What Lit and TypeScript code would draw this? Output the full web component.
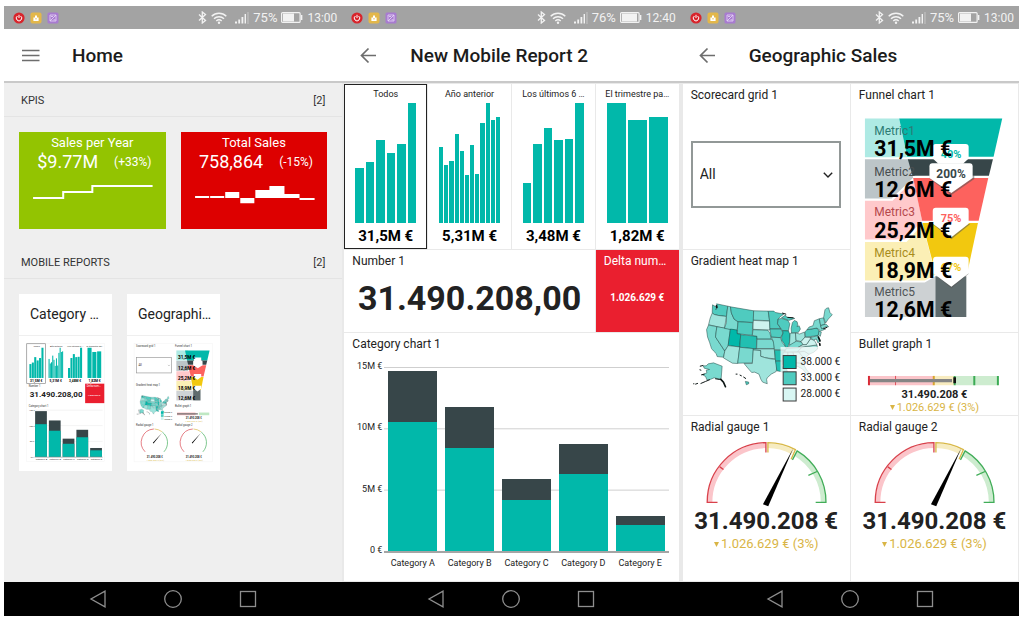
import { LitElement, html, css, svg } from "lit";
import { customElement, property } from "lit/decorators.js";
import { classMap } from "lit/directives/class-map.js";

const TEAL = "#01b8aa";
const SLATE = "#374649";

interface Selector {
  label: string;
  value: string;
  bars: number[];
  dense?: boolean;
}

const selectors: Selector[] = [
  { label: "Todos", value: "31,5M €", bars: [46, 51, 69, 58, 66, 100] },
  { label: "Año anterior", value: "5,31M €", bars: [63, 48, 52, 74, 60, 40, 65, 41, 83, 100, 86, 88], dense: true },
  { label: "Los últimos 6 …", value: "3,48M €", bars: [33, 66, 79, 69, 70, 100] },
  { label: "El trimestre pa…", value: "1,82M €", bars: [100, 86, 88] },
];

const categories = [
  { name: "Category A", total: 98, lower: 70 },
  { name: "Category B", total: 78, lower: 56 },
  { name: "Category C", total: 39, lower: 28 },
  { name: "Category D", total: 58, lower: 42 },
  { name: "Category E", total: 19, lower: 14 },
];

const L0 = "#cdf3ef";
const L1 = "#9fe4dc";
const L2 = "#79d9cf";
const L3 = "#4fcbbf";
const L4 = "#22bfb1";

const states: [string, string][] = [
  [L3, "95,165 107,172 105,180 110,172 107,162 141,169 137,200 112,197 100,194 94,189"],
  [L1, "94,190 100,194 112,197 137,200 131,236 83,225 88,205"],
  [L2, "83,226 108,231 104,262 132,305 128,323 109,321 106,312 98,304 92,297 86,278 80,262 77,240"],
  [L2, "108,231 149,238 142,290 136,298 132,304 104,262"],
  [L2, "141,169 149,171 152,190 160,208 172,216 169,243 131,236 137,218 137,200"],
  [L3, "149,171 219,183 218,218 172,216 160,208 152,190"],
  [L3, "172,216 216,219 215,257 169,252"],
  [TEAL, "149,238 169,241 169,252 180,254 177,292 142,288"],
  [L4, "180,255 229,260 227,298 177,293"],
  [L1, "142,288 177,292 171,342 155,341 128,325 132,304 136,298"],
  [L2, "177,293 218,297 215,340 171,341"],
  [L2, "219,183 263,184 267,213 218,211"],
  [L0, "218,212 267,214 268,241 217,239"],
  [L2, "217,240 262,242 268,250 272,268 229,268 229,260 215,257"],
  [L2, "229,269 274,269 281,280 281,297 228,297"],
  [L1, "218,298 281,298 284,328 265,326 252,324 240,320 240,303 218,301"],
  [L1, "218,301 240,303 240,320 252,324 265,327 285,330 289,350 287,366 272,374 260,385 258,390 260,403 246,398 241,390 235,374 222,368 213,369 205,360 190,342 215,342"],
  [L3, "263,184 280,184 284,188 310,193 298,202 292,209 291,222 301,237 268,237 267,213"],
  [L3, "268,238 301,238 308,250 300,264 272,262"],
  [L2, "272,263 300,264 305,278 318,296 314,302 282,300 278,274"],
  [L4, "282,302 313,302 305,335 285,334"],
  [L4, "285,335 304,335 304,352 316,354 322,368 312,370 300,366 289,364"],
  [L3, "293,208 303,206 322,212 328,222 324,243 306,243 301,236 291,222"],
  [L4, "306,243 324,244 329,256 328,275 322,293 317,294 311,282 304,272 303,262 308,250"],
  [L3, "303,204 315,196 318,202 330,204 343,206 325,212"],
  [L3, "336,218 342,212 350,216 352,224 350,231 356,228 360,238 354,248 333,250 332,236"],
  [L1, "329,251 345,250 347,275 335,285 327,286"],
  [L1, "345,250 358,253 372,247 374,262 362,276 347,272"],
  [L2, "322,294 330,285 347,275 362,277 368,284 352,294"],
  [L2, "317,297 365,293 352,307 313,308"],
  [L2, "308,308 322,308 322,345 306,345"],
  [L2, "322,308 338,308 344,338 325,342"],
  [L1, "338,308 356,308 372,328 368,342 345,340"],
  [L1, "325,343 344,340 368,342 378,360 392,376 388,386 380,374 366,358 350,350 335,350"],
  [L1, "356,308 372,304 386,314 372,328"],
  [L1, "352,306 366,292 410,286 412,298 400,308 386,314 372,305"],
  [L0, "352,294 368,285 378,285 390,268 402,272 410,286 366,292"],
  [L0, "362,276 374,262 388,264 394,262 378,285 368,285"],
  [L3, "374,246 380,240 410,235 417,245 413,258 375,262"],
  [L2, "380,240 386,232 398,228 402,213 417,207 422,233 436,238 421,244 410,235"],
  [L2, "417,207 430,204 434,224 421,227"],
  [L2, "430,203 434,180 439,175 445,174 449,188 456,195 444,208 436,220"],
  [L2, "421,228 437,223 445,231 434,232 424,238"],
  [L2, "416,244 423,247 420,260 414,256"],
  [L2, "388,264 413,258 420,272 413,280 408,268 400,271"],
  [L2, "67,349 76,349 82,343 98,340 124,350 121,388 112,388 100,385 88,390 78,391 74,381 65,376 78,370 76,362 86,360 70,356"],
  [L3, "194,396 204,398 204,403 197,406"],
];

const usMap = svg`
  <g stroke="#1d4441" stroke-width="1.500" stroke-linejoin="round">
    ${states.map(([fill, points]) => svg`<polygon fill=${fill} points=${points}></polygon>`)}
  </g>
  <g fill="none" stroke="#0c1514" stroke-linecap="round">
    <path stroke-width="5" d="M107 168l1 5M414 262l5 12M418 282l1 5M120 390l8 8 6 14"></path>
    <path stroke-width="3" d="M66 348l-8 2M60 362l-3-1M70 374l-8 2M86 391l-12 5-14 6M50 402l-6 2M38 403h1M166 374h3M178 377l4 2M189 383l6 4M306 190l10 3M322 203l16 1M430 237l10-4M104 388l12 2"></path>
  </g>`;

const gauge = svg`
  <g fill="none" stroke-width="15">
    <path stroke="#fbc5ca" d="M87 275A171 171 0 0 1 256 104"></path>
    <path stroke="#f6ecc1" d="M261 104A171 171 0 0 1 337 123"></path>
    <path stroke="#cdeccf" d="M344 127A171 171 0 0 1 429 275"></path>
  </g>
  <g fill="none" stroke-width="4">
    <path stroke="#d9414b" d="M110 275H79A179 179 0 0 1 256 95V125M117 168l11 8"></path>
    <path stroke="#d8b846" d="M262 125V95A179 179 0 0 1 345 116L332 145"></path>
    <path stroke="#41ad58" d="M336 147L350 120A179 179 0 0 1 437 275H406M384 194l26-12"></path>
  </g>
  <path d="M338 113L263 287 247 281Z"></path>`;

@customElement("status-bar")
class StatusBar extends LitElement {
  @property() battery = "75%";
  @property() time = "13:00";
  @property({ type: Number }) level = 10;

  static styles = css`
    :host {
      display: flex;
      align-items: center;
      justify-content: space-between;
      height: 23px;
      padding: 0 5px 0 9px;
      background: #a3a3a3;
      color: #f2f2f2;
      font-size: 13px;
    }
    .group {
      display: flex;
      align-items: center;
      gap: 5px;
    }
    .status {
      gap: 4px;
    }
    svg {
      display: block;
    }
    .wifi {
      margin-right: 4px;
    }
    .time {
      font-size: 12px;
    }
  `;

  render() {
    return html`
      <div class="group">
        <svg width="12" height="12" viewBox="0 0 12 12"><circle cx="6" cy="6" r="5.6" fill="#d8242b"></circle><path d="M4.400 4a2.700 2.700 0 1 0 3.200 0M6 2.800V6" fill="none" stroke="#fff" stroke-width="1"></path></svg>
        <svg width="12" height="12" viewBox="0 0 12 12"><rect x=".5" y=".5" width="11" height="11" rx="2" fill="#e3b74a"></rect><path d="M3.400 5.500h5.200V9H3.400zM5 5.500V3.500h2v2" fill="#fff"></path><path d="M6 6v1.500" stroke="#e3b74a"></path></svg>
        <svg width="12" height="12" viewBox="0 0 12 12"><rect x=".5" y=".5" width="11" height="11" rx="1.500" fill="#a87bd0"></rect><path d="M3 3h6v6H3zM3 9l6-6M4 4.500h2M6.500 7.800h2" fill="none" stroke="#e9d9f7" stroke-width=".8"></path></svg>
      </div>
      <div class="group status">
        <svg width="9" height="13" viewBox="0 0 9 13"><path d="M1 3.500l6.500 6L4.300 12V1l3.200 2.500L1 9.500" fill="none" stroke="#f2f2f2" stroke-width="1.300"></path></svg>
        <svg class="wifi" width="16" height="12" viewBox="0 0 16 12"><g fill="none" stroke="#f2f2f2" stroke-width="1.500"><path d="M.7 4.200a10.500 10.500 0 0 1 14.600 0M3 6.700a7.200 7.200 0 0 1 10 0M5.300 9a4 4 0 0 1 5.400 0"></path></g><circle cx="8" cy="10.700" r="1.200" fill="#f2f2f2"></circle></svg>
        <svg width="14" height="12" viewBox="0 0 14 12"><path d="M0 9.500h2v2H0zM3.300 7.500h1.800v4H3.300zM6.500 5h1.800v6.500H6.500zM9.600 2h1.400v9.500H9.600z" fill="#f2f2f2"></path><path d="M13 0v12" stroke="#c6c6c6"></path></svg>
        <span>${this.battery}</span>
        <svg width="22" height="11" viewBox="0 0 22 11"><rect x=".6" y=".6" width="18.500" height="9.800" rx="1" fill="none" stroke="#f2f2f2" stroke-width="1.200"></rect><rect x="2" y="1.500" width=${this.level} height="8" fill="#f2f2f2"></rect><path d="M20.600 3v5" stroke="#f2f2f2" stroke-width="1.500"></path></svg>
        <span class="time">${this.time}</span>
      </div>
    `;
  }
}

@customElement("title-bar")
class TitleBar extends LitElement {
  @property() heading = "";
  @property() icon = "back";

  static styles = css`
    :host {
      display: flex;
      align-items: center;
      gap: 30px;
      height: 52px;
      padding: 0 18px;
      background: #fff;
      border-bottom: 2px solid #c9c9c9;
    }
    button {
      display: block;
      padding: 0;
      border: 0;
      background: none;
    }
    svg {
      display: block;
    }
    h1 {
      margin: 0;
      padding-top: 2px;
      font-size: 19px;
      line-height: 24px;
      font-weight: 500;
      color: #1c1c1c;
    }
  `;

  render() {
    return html`
      <button aria-label=${this.icon === "menu" ? "Menu" : "Back"}>
        <svg width="20" height="20" viewBox="0 0 20 20" fill="none" stroke="#6d6d6d" stroke-width="1.700">
          ${this.icon === "menu"
            ? svg`<path d="M0 5.500h17.500M0 10.500h17.500M0 15.500h17.500"></path>`
            : svg`<path d="M16 10.500H1.500M8.500 3.500l-7 7 7 7"></path>`}
        </svg>
      </button>
      <h1>${this.heading}</h1>
    `;
  }
}

@customElement("nav-bar")
class NavBar extends LitElement {
  static styles = css`
    :host {
      display: flex;
      align-items: center;
      justify-content: center;
      gap: 57px;
      height: 34px;
      background: #000;
    }
    button {
      padding: 0;
      border: 0;
      background: none;
    }
    svg {
      display: block;
    }
  `;

  render() {
    const icon = (label: string, shape: unknown) => html`
      <button aria-label=${label}>
        <svg width="18" height="18" viewBox="0 0 18 18" fill="none" stroke="#8e8e8e" stroke-width="1.300">${shape}</svg>
      </button>`;
    return html`
      ${icon("Back", svg`<path d="M16 1.200v15.600L2 9z"></path>`)}
      ${icon("Home", svg`<circle cx="9" cy="9" r="8.300"></circle>`)}
      ${icon("Recent", svg`<rect x="1.500" y="1.500" width="15" height="15"></rect>`)}
    `;
  }
}

@customElement("home-screen")
class HomeScreen extends LitElement {
  static styles = css`
    :host {
      display: block;
      padding-top: 1px;
      background: #efefef;
      color: #333;
    }
    h2 {
      display: flex;
      justify-content: space-between;
      align-items: center;
      height: 32px;
      margin: 0;
      padding: 0 17px;
      border-bottom: 1px solid #e4e4e4;
      font-size: 11px;
      font-weight: 400;
      color: #333;
    }
    .kpis {
      display: grid;
      grid-template-columns: 1fr 1fr;
      gap: 15px;
      padding: 15px 15px 17px;
    }
    .kpi {
      height: 97px;
      color: #fff;
      text-align: center;
    }
    .green {
      background: #93c401;
    }
    .red {
      background: #dd0000;
    }
    h3 {
      margin: 0;
      padding-top: 2px;
      font-size: 13px;
      line-height: 17px;
      font-weight: 400;
    }
    .figures {
      display: flex;
      justify-content: center;
      align-items: center;
      gap: 16px;
      padding-left: 4px;
      line-height: 22px;
    }
    .amount {
      font-size: 18px;
    }
    .change {
      font-size: 12px;
    }
    svg {
      display: block;
      width: 100%;
    }
    .reports {
      display: flex;
      gap: 15px;
      padding: 15px;
    }
    .report {
      width: 93px;
      color: #222;
      text-decoration: none;
    }
    .name {
      display: block;
      margin-bottom: 1px;
      padding: 0 11px;
      background: #fff;
      font-size: 14px;
      line-height: 41px;
      white-space: nowrap;
    }
    .thumb {
      display: block;
      background: #fff;
    }
    text {
      font-family: Roboto, sans-serif;
    }
  `;

  private miniBars(x: number, width: number, data: number[]) {
    const step = width / data.length;
    return data.map(
      (v, i) => svg`<rect x=${x + i * step} y=${295 - v * 0.9} width=${step * 0.85} height=${v * 0.9} fill=${TEAL}></rect>`
    );
  }

  render() {
    const miniText = (x: number, y: number, t: string, size = 8, fill = "#333", weight = 400) =>
      svg`<text x=${x} y=${y} font-size=${size} fill=${fill} font-weight=${weight}>${t}</text>`;
    return html`
      <h2><span>KPIS</span><span>[2]</span></h2>
      <div class="kpis">
        <section class="kpi green">
          <h3>Sales per Year</h3>
          <div class="figures"><span class="amount">$9.77M</span><span class="change">(+33%)</span></div>
          <svg viewBox="0 0 146 40"><path d="M14 25h30v-6h29v-6h60" fill="none" stroke="#fff" stroke-width="2"></path></svg>
        </section>
        <section class="kpi red">
          <h3>Total Sales</h3>
          <div class="figures"><span class="amount">758,864</span><span class="change">(-15%)</span></div>
          <svg viewBox="0 0 146 40"><path fill="#fff" d="M14 23h14v2H14zM29 23h14v2H29zM44 19h14v6H44zM59 25h14v5H59zM74 17h14v8H74zM88 13h15v12H88zM103 21h15v4h-15zM118 25h15v2h-15z"></path></svg>
        </section>
      </div>
      <h2><span>MOBILE REPORTS</span><span>[2]</span></h2>
      <div class="reports">
        <a class="report" href="#category">
          <span class="name">Category …</span>
          <svg class="thumb" viewBox="59 170 277 402">
            <rect x="82" y="193" width="231" height="350" fill="none" stroke="#eee"></rect>
            <rect x="82" y="193" width="56" height="118" fill="none" stroke="#888" stroke-width="2"></rect>
            ${this.miniBars(90, 43, selectors[0].bars)} ${this.miniBars(147, 44, selectors[1].bars)}
            ${this.miniBars(205, 43, selectors[2].bars)} ${this.miniBars(263, 43, selectors[3].bars)}
            ${miniText(102, 202, "Todos", 7)} ${miniText(151, 202, "Año anterior", 7)}
            ${miniText(203, 202, "Los últimos 6 …", 7)} ${miniText(260, 202, "El trimestre pa…", 7)}
            ${selectors.map((s, i) => miniText(92 + i * 58, 306, s.value, 10, "#000", 700))}
            ${miniText(88, 321, "Number 1")} ${miniText(91, 352, "31.490.208,00", 24, "#222", 700)}
            <rect x="256" y="312" width="57" height="58" fill="#ea1f2f"></rect>
            ${miniText(261, 321, "Delta num…", 8, "#fff")} ${miniText(264, 348, "1.026.629 €", 7, "#fff", 700)}
            ${miniText(88, 381, "Category chart 1")}
            <path d="M105 391h203M105 437h203M105 484h203" stroke="#ddd"></path>
            ${categories.map((c, i) => {
              const x = 107 + i * 41;
              return svg`<rect x=${x} y=${530 - c.total * 1.39} width="35" height=${c.total * 1.39} fill=${SLATE}></rect>
                <rect x=${x} y=${530 - c.lower * 1.39} width="35" height=${c.lower * 1.39} fill=${TEAL}></rect>
                ${miniText(x + 2, 540, c.name, 7)}`;
            })}
            ${miniText(89, 393, "15M €", 6)} ${miniText(89, 440, "10M €", 6)} ${miniText(91, 486, "5M €", 6)} ${miniText(94, 532, "0 €", 6)}
            <path d="M105 531h203" stroke="#999" stroke-width="2"></path>
          </svg>
        </a>
        <a class="report" href="#geographic">
          <span class="name">Geographi…</span>
          <svg class="thumb" viewBox="382 170 277 402">
            <rect x="403" y="193" width="234" height="352" fill="none" stroke="#eee"></rect>
            ${miniText(409, 203, "Scorecard grid 1")} ${miniText(525, 203, "Funnel chart 1")}
            <rect x="410" y="234" width="105" height="46" fill="none" stroke="#999" stroke-width="2"></rect>
            ${miniText(416, 260, "All", 9)}
            <path d="M504 256l3 3 3-3" fill="none" stroke="#666"></path>
            ${miniText(409, 320, "Gradient heat map 1")}
            <g transform="translate(403 310) scale(.23)">${usMap}</g>
            <path d="M483 394h8v8h-8z" fill=${TEAL}></path><path d="M483 403h8v8h-8z" fill=${L3}></path><path d="M483 412h8v8h-8z" fill=${L0}></path>
            ${miniText(493, 400, "38.000 €", 6)} ${miniText(493, 410, "33.000 €", 6)} ${miniText(493, 419, "28.000 €", 6)}
            <path fill="#aeeae4" d="M529 213h35v30h-35z"></path><path fill="#bcc5c8" d="M529 244h35v30h-35z"></path>
            <path fill="#ffc9cb" d="M529 275h40v28h-40z"></path><path fill="#fbefb5" d="M529 304h45v28h-45z"></path><path fill="#cfd3d5" d="M529 333h50v29h-50z"></path>
            <path fill=${TEAL} d="M555 213h73l-7 30h-60z"></path><path fill=${SLATE} d="M561 243h60l-3 13h-54z"></path>
            <path fill="#fd625e" d="M564 257h54l-8 34h-38z"></path><path fill="#f2c80f" d="M572 292h38l-8 39h-23z"></path><path fill="#5f6b6d" d="M579 331h22v31h-22z"></path>
            <path fill="#fff" d="M580 234h23v9l4 2v12l-14 9-14-9v-12l3-2zM581 283h22v9l-11 8-11-8zM581 318h22v9l-11 8-11-8z"></path>
            ${[["31,5M €", 240], ["12,6M €", 271], ["25,2M €", 300], ["18,9M €", 331], ["12,6M €", 360]].map(([t, y]) =>
              miniText(534, Number(y), String(t), 14, "#000", 700))}
            ${miniText(525, 381, "Bullet graph 1")}
            <path stroke="#f9b7bc" stroke-width="8" d="M531 402h55"></path><path stroke="#bfe8c3" stroke-width="8" d="M596 402h31"></path>
            <path stroke="#777" stroke-width="4" d="M531 402h62"></path>
            ${miniText(557, 416, "31.490.208 €", 8, "#222", 700)} ${miniText(555, 425, "1.026.629 € (3%)", 7, "#d8b846")}
            ${miniText(409, 439, "Radial gauge 1")} ${miniText(525, 439, "Radial gauge 2")}
            ${[462, 578].map((x) => svg`
              <g fill="none" stroke-width="2">
                <path stroke="#d9414b" d="M${x - 26} 515a40 40 0 0 1 26-68"></path>
                <path stroke="#d8b846" d="M${x + 2} 447a40 40 0 0 1 22 8"></path>
                <path stroke="#41ad58" d="M${x + 25} 456a40 40 0 0 1 5 59"></path>
              </g>
              <path d="M${x - 3} 488l2 2 25-31z"></path>
              ${miniText(x - 21, 533, "31.490.208 €", 8, "#222", 700)} ${miniText(x - 22, 541, "1.026.629 € (3%)", 7, "#d8b846")}`)}
          </svg>
        </a>
      </div>
    `;
  }
}

const tileStyles = css`
  :host {
    display: grid;
    grid-template-rows: repeat(6, minmax(82px, auto));
    gap: 1px;
    padding: 1px 1px 1px 2px;
    background: #e9e9e9;
    color: #222;
  }
  .tile {
    display: flex;
    flex-direction: column;
    min-width: 0;
    background: #fff;
  }
  h2 {
    margin: 0;
    padding: 4px 8px 0;
    font-size: 12px;
    line-height: 15px;
    font-weight: 400;
    white-space: nowrap;
  }
`;

@customElement("category-report")
class CategoryReport extends LitElement {
  static styles = [
    tileStyles,
    css`
      :host {
        grid-template-columns: repeat(4, minmax(0, 1fr));
        padding-right: 2px;
      }
      .selector {
        grid-row: span 2;
        align-items: stretch;
        padding: 2px 10px;
        border: 1px solid #fff;
        font: 400 9px/14px Roboto, sans-serif;
        color: #222;
        text-align: center;
      }
      .selected {
        border-color: #222;
      }
      .label {
        margin: 0 -8px 2px;
        white-space: nowrap;
      }
      .bars {
        display: flex;
        align-items: flex-end;
        flex: 1;
        gap: 2px;
      }
      .dense {
        gap: 1px;
      }
      .bar {
        flex: 1;
        background: #01b8aa;
      }
      .value {
        margin: 3px -8px 0;
        font-size: 15px;
        line-height: 20px;
        font-weight: 700;
        color: #000;
      }
      .number {
        grid-column: span 3;
      }
      .big {
        margin: auto;
        padding-bottom: 6px;
        font-size: 34px;
        line-height: 40px;
        font-weight: 700;
      }
      .delta {
        background: #ea1f2f;
        color: #fff;
      }
      .small {
        margin: auto;
        padding-bottom: 6px;
        font-size: 10px;
        line-height: 14px;
        font-weight: 700;
      }
      .chart {
        grid-column: span 4;
        grid-row: span 3;
      }
      .frame {
        display: grid;
        grid-template-columns: 30px 1fr;
        column-gap: 2px;
        padding: 15px 10px 0 8px;
        font-size: 9px;
        line-height: 12px;
      }
      .axis {
        display: flex;
        flex-direction: column;
        justify-content: space-between;
        height: 196px;
        margin: -7px 0 -5px;
        text-align: right;
      }
      .plot {
        display: grid;
        grid-template-columns: repeat(5, 1fr);
        align-items: end;
        height: 184px;
        border-bottom: 2px solid #a5a5a5;
        background: linear-gradient(#cfcfcf 1px, transparent 1px) 0 0 / 100% 33.33%;
      }
      .stack {
        display: flex;
        flex-direction: column;
        justify-content: flex-end;
        margin: 0 4px;
        background: #374649;
      }
      .lower {
        background: #01b8aa;
      }
      .names {
        grid-column: 2;
        display: grid;
        grid-template-columns: repeat(5, 1fr);
        padding-top: 4px;
        text-align: center;
      }
    `,
  ];

  render() {
    return html`
      ${selectors.map(
        (s, i) => html`
          <button class=${classMap({ tile: true, selector: true, selected: i === 0 })}>
            <span class="label">${s.label}</span>
            <span class=${classMap({ bars: true, dense: !!s.dense })}>
              ${s.bars.map((v) => html`<span class="bar" style="height:${v}%"></span>`)}
            </span>
            <span class="value">${s.value}</span>
          </button>
        `
      )}
      <section class="tile number"><h2>Number 1</h2><div class="big">31.490.208,00</div></section>
      <section class="tile delta"><h2>Delta num…</h2><div class="small">1.026.629 €</div></section>
      <section class="tile chart">
        <h2>Category chart 1</h2>
        <div class="frame">
          <div class="axis"><span>15M €</span><span>10M €</span><span>5M €</span><span>0 €</span></div>
          <div class="plot">
            ${categories.map(
              (c) => html`<div class="stack" style="height:${c.total}%"><div class="lower" style="height:${(c.lower / c.total) * 100}%"></div></div>`
            )}
          </div>
          <div class="names">${categories.map((c) => html`<span>${c.name}</span>`)}</div>
        </div>
      </section>
    `;
  }
}

@customElement("geographic-report")
class GeographicReport extends LitElement {
  static styles = [
    tileStyles,
    css`
      :host {
        grid-template-columns: repeat(2, minmax(0, 1fr));
      }
      .double {
        grid-row: span 2;
      }
      .triple {
        grid-row: span 3;
      }
      svg {
        display: block;
        width: 100%;
      }
      text {
        font-family: Roboto, sans-serif;
      }
      .picker {
        display: grid;
        align-items: center;
        margin: 38px 9px 0 8px;
      }
      select {
        grid-area: 1 / 1;
        height: 67px;
        padding: 0 8px 2px 7px;
        border: 2px solid #929897;
        border-radius: 0;
        background: #fff;
        color: #222;
        font: 400 14px/20px Roboto, sans-serif;
        appearance: none;
      }
      .chevron {
        grid-area: 1 / 1;
        justify-self: end;
        width: 10px;
        margin-right: 8px;
        pointer-events: none;
      }
      .value {
        text-align: center;
        font-size: 24px;
        line-height: 26px;
        font-weight: 700;
        white-space: nowrap;
      }
      .change {
        display: flex;
        justify-content: center;
        align-items: center;
        gap: 2px;
        color: #d9b545;
        font-size: 13px;
        line-height: 20px;
      }
      .arrow {
        width: 5px;
      }
      .compact .value {
        font-size: 11px;
        line-height: 13px;
      }
      .compact .change {
        font-size: 11px;
        line-height: 14px;
      }
    `,
  ];

  private change() {
    return html`<div class="change">
      <svg class="arrow" viewBox="0 0 5 5"><path d="M0 0h5L2.500 5z" fill="#d9b545"></path></svg>
      <span>1.026.629 € (3%)</span>
    </div>`;
  }

  private gaugeTile(title: string) {
    return html`<section class="tile double">
      <h2>${title}</h2>
      <svg viewBox="6 72 504 221">${gauge}</svg>
      <div class="value">31.490.208 €</div>
      ${this.change()}
    </section>`;
  }

  render() {
    return html`
      <section class="tile double">
        <h2><label for="scorecard">Scorecard grid 1</label></h2>
        <div class="picker">
          <select id="scorecard"><option>All</option></select>
          <svg class="chevron" viewBox="0 0 10 6"><path d="M.8.8L5 5 9.200.8" fill="none" stroke="#222" stroke-width="1.400"></path></svg>
        </div>
      </section>
      <section class="tile triple">
        <h2>Funnel chart 1</h2>
        <svg viewBox="3 9 503 660">
          <path fill="#aeeae4" d="M45 56H148L172 172H45z"></path>
          <path fill="#bcc5c8" d="M45 178H178L190 234 125 296H45z"></path>
          <path fill="#ffc9cb" d="M45 303H128L192 240 217 363 165 420H45z"></path>
          <path fill="#fbefb5" d="M45 427H170L218 374 257 525 225 543H45z"></path>
          <path fill="#cdd1d3" d="M45 549H225L257 530V653H45z"></path>
          <path fill=${TEAL} d="M148 56H458L432 171H172z"></path>
          <path fill=${SLATE} d="M174 178H430L418 228H188z"></path>
          <path fill="#fd625e" d="M190 235H416L387 363H217z"></path>
          <path fill="#f2c80f" d="M218 370H385L352 524H258z"></path>
          <path fill="#5f6b6d" d="M257 530H350V653H257z"></path>
          <g fill="#555" opacity=".55">
            <path d="M240 238L305 286 374 238V226H240zM248 373L305 419 362 373zM253 522L305 567 358 522z"></path>
          </g>
          <g fill="#fff">
            <path d="M264 132H348q9 0 9 9V176L340 192H266L249 176V141q0-9 9-9z"></path>
            <path d="M250 190H360q9 0 9 9V235L305 280 239 235V199q0-9 9-9z"></path>
            <path d="M258 324H348q9 0 9 9V372L305 413 249 372V333q0-9 9-9z"></path>
            <path d="M258 472H348q9 0 9 9V521L305 562 250 521V481q0-9 9-9z"></path>
          </g>
          <g font-size="33" font-weight="700" text-anchor="middle">
            <text x="304" y="175" fill=${TEAL}>40%</text>
            <text x="304" y="234" font-size="36" fill=${SLATE}>200%</text>
            <text x="304" y="368" fill="#fd625e">75%</text>
            <text x="304" y="515" fill="#f2c80f">67%</text>
          </g>
          <g font-size="36">
            <text x="73" y="105" fill="#2c7a73">Metric1</text>
            <text x="73" y="228" fill="#484d4f">Metric2</text>
            <text x="73" y="350" fill="#b5484b">Metric3</text>
            <text x="73" y="473" fill="#a88d1c">Metric4</text>
            <text x="73" y="591" fill="#505456">Metric5</text>
          </g>
          <g font-size="64" font-weight="700">
            <text x="73" y="168">31,5M €</text>
            <text x="73" y="291">12,6M €</text>
            <text x="73" y="414">25,2M €</text>
            <text x="73" y="537">18,9M €</text>
            <text x="73" y="653">12,6M €</text>
          </g>
        </svg>
      </section>
      <section class="tile double">
        <h2>Gradient heat map 1</h2>
        <svg viewBox="6 57 504 410">
          ${usMap}
          <rect x="300" y="292" width="190" height="170" fill="#fff" fill-opacity=".75"></rect>
          <g stroke="#3a3a3a" stroke-width="3">
            <rect x="308" y="318" width="39" height="39" fill=${TEAL}></rect>
            <rect x="308" y="367" width="39" height="39" fill=${L3}></rect>
            <rect x="308" y="416" width="39" height="39" fill="#d8f6f3"></rect>
          </g>
          <g font-size="31" fill="#222">
            <text x="360" y="347">38.000 €</text>
            <text x="360" y="396">33.000 €</text>
            <text x="360" y="444">28.000 €</text>
          </g>
        </svg>
      </section>
      <section class="tile compact">
        <h2>Bullet graph 1</h2>
        <svg viewBox="3 66 503 108">
          <path fill="#fbc5ca" d="M57 138H250V166H57z"></path>
          <path fill="#f8ecc0" d="M250 138H314V166H250z"></path>
          <path fill="#cdeccf" d="M318 138H446V166H318z"></path>
          <g stroke-width="6">
            <path stroke="#d92b36" d="M57 138V166"></path>
            <path stroke="#e0525b" stroke-width="3" d="M137 138V166"></path>
            <path stroke="#d8a52e" d="M252 138V166"></path>
            <path stroke="#3cab55" d="M315 138V166M374 138V166M445 138V166"></path>
          </g>
          <path fill="#858585" d="M60 147H307V157H60z"></path>
          <path fill="#111" d="M311 142H319V160H311z"></path>
        </svg>
        <div class="value">31.490.208 €</div>
        ${this.change()}
      </section>
      ${this.gaugeTile("Radial gauge 1")} ${this.gaugeTile("Radial gauge 2")}
    `;
  }
}

@customElement("app-root")
class AppRoot extends LitElement {
  static styles = css`
    :host {
      display: grid;
      grid-template-columns: repeat(3, minmax(0, 1fr));
      box-sizing: border-box;
      min-height: 100vh;
      padding: 6px 5px 2px 4px;
      background: #fff;
      font-family: Roboto, sans-serif;
    }
    .phone {
      display: flex;
      flex-direction: column;
      min-width: 0;
    }
    .screen {
      flex: 1;
    }
  `;

  render() {
    return html`
      <section class="phone">
        <status-bar battery="75%" time="13:00" level="11"></status-bar>
        <title-bar heading="Home" icon="menu"></title-bar>
        <home-screen class="screen"></home-screen>
        <nav-bar></nav-bar>
      </section>
      <section class="phone">
        <status-bar battery="76%" time="12:40" level="15"></status-bar>
        <title-bar heading="New Mobile Report 2"></title-bar>
        <category-report class="screen"></category-report>
        <nav-bar></nav-bar>
      </section>
      <section class="phone">
        <status-bar battery="75%" time="13:00" level="11"></status-bar>
        <title-bar heading="Geographic Sales"></title-bar>
        <geographic-report class="screen"></geographic-report>
        <nav-bar></nav-bar>
      </section>
    `;
  }
}
